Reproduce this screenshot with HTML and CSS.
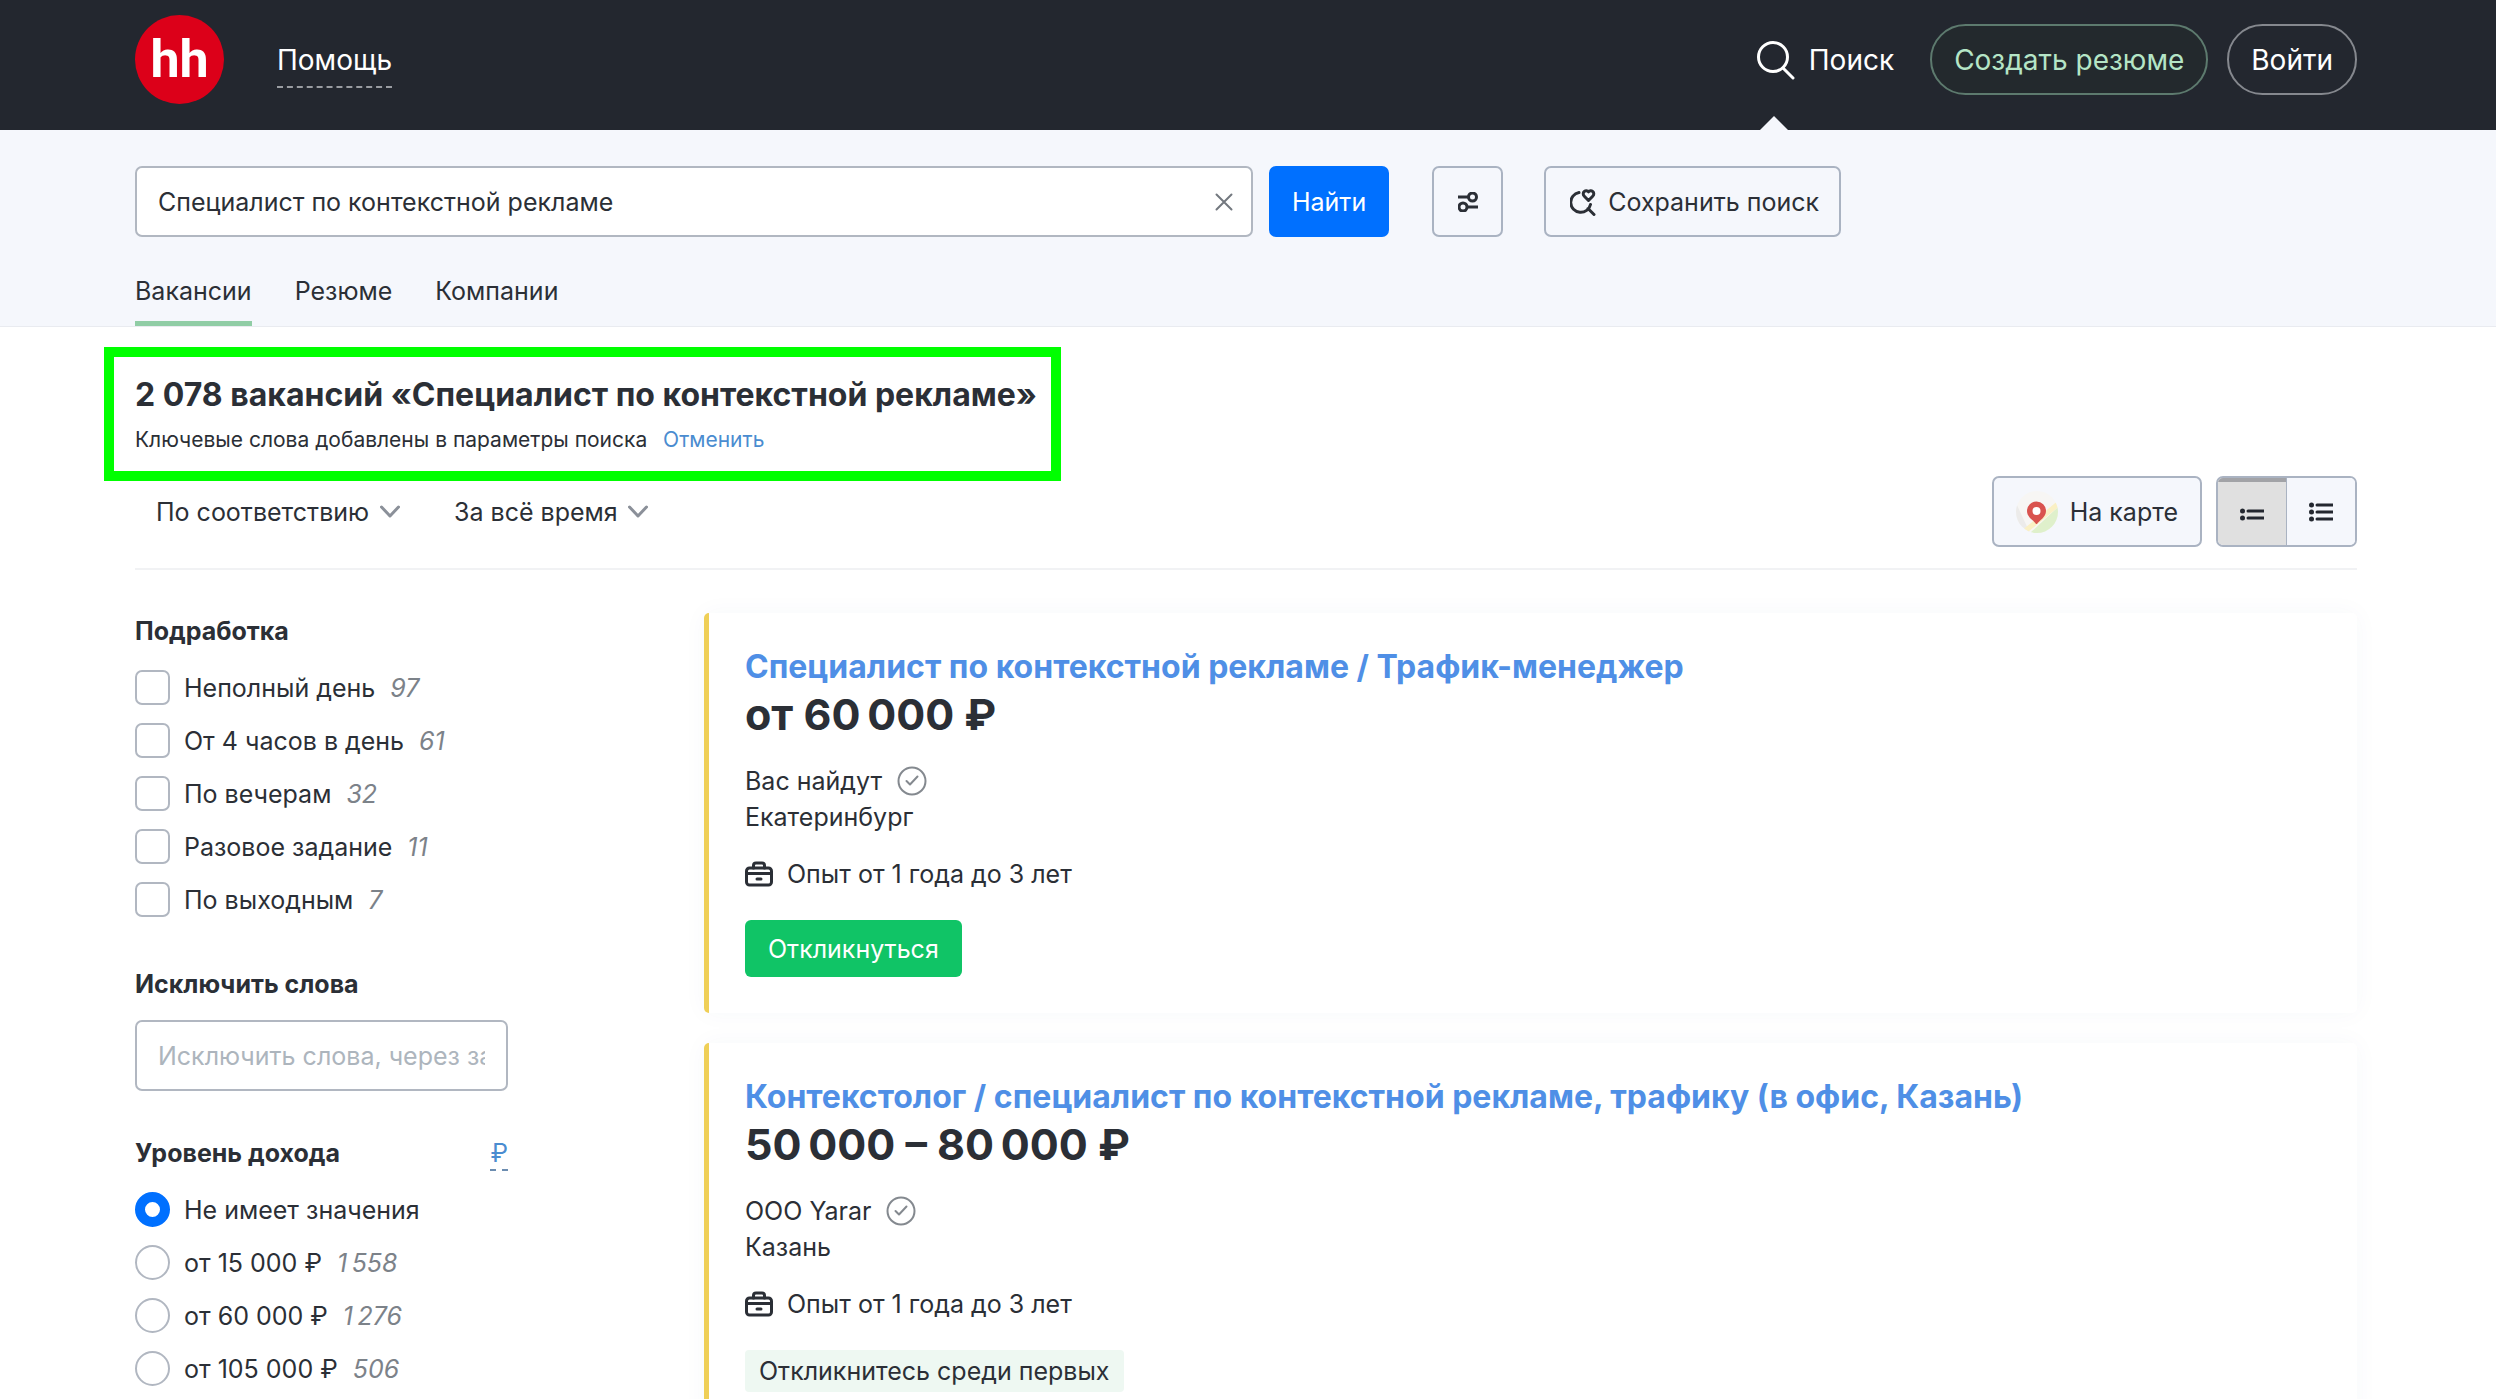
FILE: index.html
```html
<!DOCTYPE html>
<html lang="ru">
<head>
<meta charset="utf-8">
<meta name="viewport" content="width=device-width, initial-scale=1">
<title>Вакансии «Специалист по контекстной рекламе»</title>
<link rel="stylesheet" href="styles.css">
</head>
<body>
<svg class="sprite" aria-hidden="true">
  <symbol id="verified" viewBox="0 0 30 30"><circle cx="15" cy="15" r="13.500"/><path d="M9.500 15l3.500 3.500 7.500-8"/></symbol>
  <symbol id="briefcase" viewBox="0 0 28 28"><rect x="1.500" y="8" width="25" height="17" rx="3"/><path d="M8.500 8V5.500a2.500 2.500 0 0 1 2.500-2.500h6a2.500 2.500 0 0 1 2.500 2.500V8M1.500 13.500h25M12 19h4"/></symbol>
  <symbol id="chevron" viewBox="0 0 20 14"><path d="M1.500 2l8.500 9 8.500-9"/></symbol>
</svg>

<header class="topbar">
  <a class="logo" href="#">hh</a>
  <a class="help" href="#">Помощь</a>
  <nav class="account">
    <a class="search-link" href="#">
      <svg class="icon-search" viewBox="0 0 40 40" aria-hidden="true"><circle cx="17" cy="17" r="14.500"/><path d="M27 28l10 10"/></svg>
      Поиск
    </a>
    <a class="pill pill--accent" href="#">Создать резюме</a>
    <a class="pill" href="#">Войти</a>
  </nav>
</header>

<section class="search">
  <form class="search-form">
    <div class="query">
      <input class="field" type="text" value="Специалист по контекстной рекламе" aria-label="Поиск вакансий">
      <button class="clear" type="button" aria-label="Очистить"><svg viewBox="0 0 18 18"><path d="M1.500 1.500l15 15M16.500 1.500l-15 15"/></svg></button>
    </div>
    <button class="button button--primary" type="submit">Найти</button>
    <button class="button button--filter" type="button" aria-label="Фильтры">
      <svg class="icon-filter" viewBox="0 0 20 20"><path d="M0 5h10.500M9.500 15H20"/><circle cx="14.500" cy="5" r="4"/><circle cx="5" cy="15" r="4"/></svg>
    </button>
    <button class="button button--save" type="button">
      <svg class="icon-save" viewBox="0 0 26 28"><path d="M9 4.500A10 10 0 1 0 20.500 16.500M18 20.500l6 6"/><path d="M18.500 12.500l-4.200-4.300a3.100 3.100 0 0 1 0-4.700 2.900 2.900 0 0 1 4.200.3 2.900 2.900 0 0 1 4.200-.3 3.100 3.100 0 0 1 0 4.700z"/></svg>
      Сохранить поиск
    </button>
  </form>
  <nav class="tabs">
    <a class="tab tab--active" href="#">Вакансии</a>
    <a class="tab" href="#">Резюме</a>
    <a class="tab" href="#">Компании</a>
  </nav>
</section>

<main class="page">
  <div class="summary">
    <h1 class="summary-title">2 078 вакансий «Специалист по контекстной рекламе»</h1>
    <p class="summary-note">Ключевые слова добавлены в параметры поиска <a class="cancel" href="#">Отменить</a></p>
  </div>

  <div class="toolbar">
    <div class="dropdown">
      <select class="select" aria-label="Сортировка"><option>По соответствию</option></select>
      <svg class="chevron" aria-hidden="true"><use href="#chevron"/></svg>
    </div>
    <div class="dropdown">
      <select class="select" aria-label="Период"><option>За всё время</option></select>
      <svg class="chevron" aria-hidden="true"><use href="#chevron"/></svg>
    </div>
    <div class="views">
      <button class="button button--map" type="button">
        <svg class="icon-map" viewBox="0 0 42 42" aria-hidden="true">
          <defs><clipPath id="disc"><circle cx="21" cy="21" r="21"/></clipPath></defs>
          <g clip-path="url(#disc)">
            <rect width="42" height="42" fill="#f7f6f4"/>
            <path d="M0 12l14 30H0z" fill="#ecebea"/>
            <path d="M42 16L14 42h28z" fill="#dff0cb"/>
            <path d="M42 13L8 41" stroke="#faf0c4" stroke-width="5"/>
          </g>
          <path d="M20 33c-2-3.500-9-6.500-9-13a9.500 9.500 0 0 1 19 0c0 6.500-7 9.500-9 13z" fill="#d9534f"/>
          <circle cx="20.500" cy="20" r="4" fill="#fff"/>
        </svg>
        На карте
      </button>
      <div class="toggle">
        <button class="toggle-item toggle-item--active" type="button" aria-label="Кратко">
          <svg class="icon-list" viewBox="0 0 24 20"><path d="M8 9h16M8 16h16"/><circle cx="2.500" cy="9" r="2.500"/><circle cx="2.500" cy="16" r="2.500"/></svg>
        </button>
        <button class="toggle-item" type="button" aria-label="Подробно">
          <svg class="icon-list" viewBox="0 0 24 20"><path d="M8 3h16M8 10h16M8 17h16"/><circle cx="2.500" cy="3" r="2.500"/><circle cx="2.500" cy="10" r="2.500"/><circle cx="2.500" cy="17" r="2.500"/></svg>
        </button>
      </div>
    </div>
  </div>

  <div class="columns">
    <aside class="filters">
      <fieldset class="group group--jobs">
        <legend class="group-title">Подработка</legend>
        <label class="option"><input class="check" type="checkbox">Неполный день<em class="count">97</em></label>
        <label class="option"><input class="check" type="checkbox">От 4 часов в день<em class="count">61</em></label>
        <label class="option"><input class="check" type="checkbox">По вечерам<em class="count">32</em></label>
        <label class="option"><input class="check" type="checkbox">Разовое задание<em class="count">11</em></label>
        <label class="option"><input class="check" type="checkbox">По выходным<em class="count">7</em></label>
      </fieldset>
      <div class="group">
        <label class="group-title group-title--field" for="exclude">Исключить слова</label>
        <input class="field" id="exclude" type="text" placeholder="Исключить слова, через запятую">
      </div>
      <div class="group" role="radiogroup" aria-labelledby="income">
        <div class="group-head">
          <h2 class="group-title" id="income">Уровень дохода</h2>
          <a class="currency" href="#">₽</a>
        </div>
        <label class="option"><input class="radio" type="radio" name="income" checked>Не имеет значения</label>
        <label class="option"><input class="radio" type="radio" name="income">от 15 000 ₽<em class="count">1&#8239;558</em></label>
        <label class="option"><input class="radio" type="radio" name="income">от 60 000 ₽<em class="count">1&#8239;276</em></label>
        <label class="option"><input class="radio" type="radio" name="income">от 105 000 ₽<em class="count">506</em></label>
      </div>
    </aside>

    <div class="results">
      <article class="card">
        <h2 class="card-title"><a href="#">Специалист по контекстной рекламе / Трафик-менеджер</a></h2>
        <p class="salary">от 60&#8239;000 ₽</p>
        <p class="company"><a href="#">Вас найдут</a><svg class="icon-verified" aria-hidden="true"><use href="#verified"/></svg></p>
        <p class="city">Екатеринбург</p>
        <p class="experience"><svg class="icon-case" aria-hidden="true"><use href="#briefcase"/></svg>Опыт от 1 года до 3 лет</p>
        <button class="respond" type="button">Откликнуться</button>
      </article>
      <article class="card card--last">
        <h2 class="card-title"><a href="#">Контекстолог / специалист по контекстной рекламе, трафику (в офис, Казань)</a></h2>
        <p class="salary">50&#8239;000 – 80&#8239;000 ₽</p>
        <p class="company"><a href="#">ООО Yarar</a><svg class="icon-verified" aria-hidden="true"><use href="#verified"/></svg></p>
        <p class="city">Казань</p>
        <p class="experience"><svg class="icon-case" aria-hidden="true"><use href="#briefcase"/></svg>Опыт от 1 года до 3 лет</p>
        <span class="badge">Откликнитесь среди первых</span>
      </article>
    </div>
  </div>
</main>
</body>
</html>
```
FILE: styles.css
```css
* { box-sizing: border-box; }

body {
  display: flex;
  flex-direction: column;
  min-height: 100vh;
  margin: 0;
  background: #fff;
  color: #2b2f36;
  font: 25px/36px Inter, "Noto Sans", sans-serif;
}

h1, h2, p { margin: 0; }
a { color: inherit; text-decoration: none; }
button, input, select { font: inherit; color: inherit; }
svg { flex: none; fill: none; stroke-linecap: round; stroke-linejoin: round; }
.sprite { position: absolute; width: 0; height: 0; }

/* Top bar */
.topbar {
  display: flex;
  align-items: center;
  padding: 24px 139px 35px 135px;
  background: #23272f;
  color: #fff;
  font-size: 28px;
}
.logo {
  width: 89px;
  height: 89px;
  margin: -10px 53px -10px 0;
  border-radius: 50%;
  background: #dc0019;
  text-align: center;
  font: 700 52px/89px Roboto, sans-serif;
}
.help {
  padding: 11px 0 8px;
  border-bottom: 2px dashed #9a9da2;
}
.account {
  display: flex;
  align-items: center;
  gap: 19px;
  margin-left: auto;
}
.search-link {
  position: relative;
  display: flex;
  align-items: center;
  gap: 13px;
  height: 71px;
  margin-right: 17px;
}
.search-link::after {
  content: "";
  position: absolute;
  left: 4px;
  bottom: -35px;
  border: 14px solid transparent;
  border-top: 0;
  border-bottom-color: #f5f7fc;
}
.icon-search { width: 40px; height: 40px; stroke: #fff; stroke-width: 3; }
.pill {
  padding: 16px 22px 15px;
  border: 2px solid #85888e;
  border-radius: 36px;
}
.pill--accent { border-color: #5d7a6e; background: #23292d; color: #b5e5c6; }

/* Search */
.search {
  padding: 36px 139px 0 135px;
  border-bottom: 1px solid #e9ebf0;
  background: #f5f7fc;
}
.search-form { display: flex; }
.search-form::after { content: ""; flex: 6 1 0; }
.query { display: flex; flex: 13 1 0; position: relative; }
.field {
  width: 100%;
  height: 71px;
  padding: 0 21px;
  border: 2px solid #b1b7c1;
  border-radius: 7px;
  background: #fff;
  outline: 0;
}
.field::placeholder { color: #adb5bd; opacity: 1; }
.clear {
  position: absolute;
  top: 0;
  right: 0;
  display: flex;
  align-items: center;
  height: 71px;
  padding: 0 20px;
  border: 0;
  background: none;
}
.clear svg { width: 18px; height: 18px; stroke: #73787f; stroke-width: 2; }
.button {
  display: flex;
  align-items: center;
  justify-content: center;
  height: 71px;
  border: 2px solid #aab3c2;
  border-radius: 7px;
  background: #f5f7fc;
}
.button--primary {
  padding: 0 21px;
  margin-left: 16px;
  border-color: #0070ff;
  background: #0070ff;
  color: #fff;
}
.button--filter { width: 71px; margin-left: 43px; }
.button--save { gap: 12px; padding: 0 20px 0 24px; margin-left: 41px; }
.icon-filter { width: 20px; height: 20px; stroke: #2b2f36; stroke-width: 3; }
.icon-save { width: 26px; height: 28px; stroke: #2b2f36; stroke-width: 3; }
.tabs { display: flex; gap: 43px; margin-top: 36px; }
.tab { padding-bottom: 12px; border-bottom: 5px solid transparent; }
.tab--active { border-color: #90cda5; }

/* Page */
.page {
  display: flex;
  flex-direction: column;
  flex: 1;
  padding: 20px 139px 0 135px;
}
.summary {
  align-self: flex-start;
  margin-left: -31px;
  padding: 18px 14px 15px 21px;
  border: 10px solid #00ff00;
}
.summary-title { font-size: 32px; line-height: 40px; }
.summary-note { margin-top: 9px; font-size: 21px; line-height: 32px; }
.cancel { margin-left: 10px; color: #4a8cd0; }

.toolbar {
  display: flex;
  align-items: center;
  gap: 54px;
  margin-top: -5px;
  padding: 0 0 21px 21px;
  border-bottom: 2px solid #f1f2f4;
}
.dropdown { display: flex; align-items: center; gap: 10px; }
.select {
  appearance: none;
  padding: 0;
  border: 0;
  background: none;
  outline: 0;
}
.chevron { width: 20px; height: 14px; stroke: #8b9099; stroke-width: 3; }
.views { display: flex; gap: 14px; margin-left: auto; }
.button--map { gap: 12px; padding: 0 22px; }
.icon-map { width: 42px; height: 42px; }
.toggle {
  display: flex;
  overflow: hidden;
  border: 2px solid #aab3c2;
  border-radius: 7px;
}
.toggle-item {
  display: flex;
  align-items: center;
  justify-content: center;
  width: 68px;
  border: 0;
  background: #f5f7fc;
}
.toggle-item--active {
  width: 69px;
  border-right: 1px solid #aab3c2;
  background: #e0e0e0;
  box-shadow: inset 0 4px #a2a3a7;
}
.icon-list { width: 24px; height: 20px; stroke: #23272f; stroke-width: 3; }
.icon-list circle { fill: #23272f; stroke: none; }

.columns {
  display: grid;
  grid-template-columns: 373px 1fr;
  gap: 196px;
  flex: 1;
  margin-top: 43px;
}

/* Filters */
.group { margin: 0 0 44px; padding: 0; border: 0; min-width: 0; }
.group--jobs { margin-bottom: 49px; }
.group-title {
  display: block;
  padding: 0;
  margin-bottom: 21px;
  font-size: 25px;
  font-weight: 700;
}
.group-title--field { margin-bottom: 18px; }
.group-head { display: flex; justify-content: space-between; }
.option { display: flex; align-items: center; height: 35px; }
.option + .option { margin-top: 18px; }
.check, .radio {
  appearance: none;
  flex: none;
  width: 35px;
  height: 35px;
  margin: 0 14px 0 0;
  border: 2px solid #b1b7c1;
  border-radius: 7px;
  background: #fff;
}
.radio { border-radius: 50%; }
.radio:checked { border: 10px solid #0070ff; }
.count { margin-left: 15px; color: #7c8289; }
.currency {
  height: 36px;
  border-bottom: 2px dashed #6c8db0;
  color: #4a8cd0;
}

/* Vacancy cards */
.results { display: flex; flex-direction: column; gap: 30px; }
.card {
  padding: 34px 36px 36px;
  border-left: 5px solid #efcf57;
  border-radius: 5px;
  box-shadow: 0 0 24px rgba(50, 70, 120, 0.04);
}
.card--last {
  flex: 1;
  padding-bottom: 0;
  border-bottom-left-radius: 0;
}
.card-title { color: #4f8fe6; font-size: 32px; line-height: 40px; }
.salary { font-size: 43px; font-weight: 700; line-height: 54px; }
.company { display: flex; align-items: center; gap: 15px; margin-top: 22px; }
.icon-verified { width: 30px; height: 30px; stroke: #84898f; stroke-width: 2; }
.experience { display: flex; align-items: center; gap: 14px; margin-top: 21px; }
.icon-case { width: 28px; height: 28px; stroke: #2b2f36; stroke-width: 3; }
.respond {
  height: 57px;
  margin-top: 28px;
  padding: 0 23px;
  border: 0;
  border-radius: 6px;
  background: #10c466;
  color: #fff;
}
.badge {
  display: inline-block;
  margin-top: 28px;
  padding: 3px 14px;
  border-radius: 4px;
  background: #eef8f2;
}
```
